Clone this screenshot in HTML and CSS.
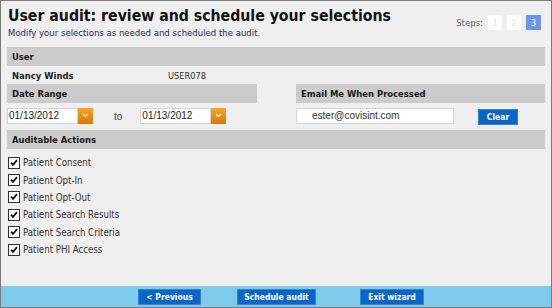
FILE: index.html
```html
<!DOCTYPE html>
<html>
<head>
<meta charset="utf-8">
<link rel="stylesheet" href="styles.css">
</head>
<body>
<div class="frame">
  <div class="head">
    <div class="titles">
      <h1 class="title">User audit: review and schedule your selections</h1>
      <p class="subtitle">Modify your selections as needed and scheduled the audit.</p>
    </div>
    <div class="steps">
      <span class="steps-label">Steps:</span>
      <span class="step">1</span>
      <span class="step">2</span>
      <span class="step step-current">3</span>
    </div>
  </div>

  <div class="content">
    <div class="bar">User</div>
    <div class="user-row">
      <span class="user-name">Nancy Winds</span>
      <span class="user-id">USER078</span>
    </div>

    <div class="cols">
      <div class="col">
        <div class="bar">Date Range</div>
        <div class="field-row">
          <span class="date-input">01/13/2012</span><span class="cal-btn"><svg width="7" height="5" viewBox="0 0 7 5"><path d="M1 1 L3.5 3.5 L6 1" fill="none" stroke="#fde7b8" stroke-width="1.4"/></svg></span>
          <span class="to">to</span>
          <span class="date-input">01/13/2012</span><span class="cal-btn"><svg width="7" height="5" viewBox="0 0 7 5"><path d="M1 1 L3.5 3.5 L6 1" fill="none" stroke="#fde7b8" stroke-width="1.4"/></svg></span>
        </div>
      </div>
      <div class="col">
        <div class="bar">Email Me When Processed</div>
        <div class="field-row">
          <span class="email-input">ester@covisint.com</span>
          <span class="btn btn-clear">Clear</span>
        </div>
      </div>
    </div>

    <div class="bar bar-actions">Auditable Actions</div>
    <ul class="checks">
      <li class="check"><span class="box"><svg width="10" height="10" viewBox="0 0 10 10"><path d="M2 4.6 L4 6.8 L8 2.2" fill="none" stroke="#111" stroke-width="1.8"/></svg></span>Patient Consent</li>
      <li class="check"><span class="box"><svg width="10" height="10" viewBox="0 0 10 10"><path d="M2 4.6 L4 6.8 L8 2.2" fill="none" stroke="#111" stroke-width="1.8"/></svg></span>Patient Opt-In</li>
      <li class="check"><span class="box"><svg width="10" height="10" viewBox="0 0 10 10"><path d="M2 4.6 L4 6.8 L8 2.2" fill="none" stroke="#111" stroke-width="1.8"/></svg></span>Patient Opt-Out</li>
      <li class="check"><span class="box"><svg width="10" height="10" viewBox="0 0 10 10"><path d="M2 4.6 L4 6.8 L8 2.2" fill="none" stroke="#111" stroke-width="1.8"/></svg></span>Patient Search Results</li>
      <li class="check"><span class="box"><svg width="10" height="10" viewBox="0 0 10 10"><path d="M2 4.6 L4 6.8 L8 2.2" fill="none" stroke="#111" stroke-width="1.8"/></svg></span>Patient Search Criteria</li>
      <li class="check"><span class="box"><svg width="10" height="10" viewBox="0 0 10 10"><path d="M2 4.6 L4 6.8 L8 2.2" fill="none" stroke="#111" stroke-width="1.8"/></svg></span>Patient PHI Access</li>
    </ul>
  </div>

  <div class="footer">
    <span class="btn btn-prev">&lt; Previous</span>
    <span class="btn btn-schedule">Schedule audit</span>
    <span class="btn btn-exit">Exit wizard</span>
  </div>
</div>
</body>
</html>
```

FILE: styles.css
```css
html, body {
  margin: 0;
  padding: 0;
}
body {
  font-family: "DejaVu Sans Condensed", "DejaVu Sans", sans-serif;
  color: #222;
}
.frame {
  box-sizing: border-box;
  width: 552px;
  height: 308px;
  border: 1px solid #7a7a7a;
  background: #efefef;
  display: flex;
  flex-direction: column;
}
.head {
  display: flex;
  justify-content: space-between;
  align-items: flex-start;
  padding: 0 10px 0 7px;
}
.title {
  margin: 0;
  padding-top: 5px;
  font-size: 15.7px;
  line-height: 20px;
  font-weight: bold;
  color: #111;
}
.subtitle {
  margin: 0;
  font-size: 9.5px;
  line-height: 13px;
  color: #2a2a55;
}
.steps {
  display: flex;
  align-items: center;
  gap: 5px;
  margin-top: 14px;
}
.steps-label {
  font-size: 9.5px;
  color: #666;
}
.step {
  width: 14px;
  height: 15px;
  background: #fff;
  color: #e2e2e2;
  font-size: 9.5px;
  text-align: center;
  line-height: 15px;
}
.step-current {
  background: #6d97e6;
  color: #fff;
  width: 15px;
}
.content {
  flex: 1;
  padding: 0 6px 0 6px;
}
.bar {
  height: 19px;
  line-height: 19px;
  background: #cccccc;
  font-weight: bold;
  font-size: 9.4px;
  padding-left: 5px;
  color: #1a1a1a;
}
.content > .bar:first-child {
  margin-top: 8px;
}
.user-row {
  display: flex;
  height: 18px;
  align-items: center;
  font-size: 9.4px;
  padding-left: 5px;
}
.user-name {
  font-weight: bold;
  width: 156px;
}
.user-id {
  color: #333;
  font-size: 9.2px;
}
.cols {
  display: grid;
  grid-template-columns: 250px 1fr;
  column-gap: 39px;
}
.field-row {
  display: flex;
  align-items: center;
  margin-top: 4px;
  height: 17px;
}
.date-input {
  box-sizing: border-box;
  width: 71px;
  height: 16px;
  background: #fff;
  border: 1px solid #d4d4d4;
  font-family: "Liberation Sans", Arial, sans-serif;
  font-size: 10px;
  line-height: 14px;
  padding-left: 1px;
  color: #222;
}
.cal-btn {
  box-sizing: border-box;
  width: 15px;
  height: 16px;
  background: linear-gradient(#f6a32a, #d97a08);
  display: flex;
  align-items: center;
  justify-content: center;
}
.to {
  font-family: "Liberation Sans", Arial, sans-serif;
  font-size: 10px;
  color: #444;
  margin: 2px 18px 0 21px;
}
.email-input {
  box-sizing: border-box;
  width: 158px;
  height: 16px;
  background: #fff;
  border: 1px solid #d4d4d4;
  font-family: "Liberation Sans", Arial, sans-serif;
  font-size: 10px;
  line-height: 14px;
  padding-left: 15px;
  color: #333;
}
.btn {
  box-sizing: border-box;
  display: inline-flex;
  align-items: center;
  justify-content: center;
  height: 16px;
  background: #0a66c6;
  border: 1px solid #2f84d8;
  color: #fff;
  font-weight: bold;
  font-size: 8.5px;
}
.btn-clear {
  width: 40px;
  margin-left: 24px;
  margin-top: 2px;
}
.bar-actions {
  margin-top: 6px;
}
.checks {
  list-style: none;
  margin: 5px 0 0 0;
  padding: 0;
}
.check {
  display: flex;
  align-items: center;
  height: 17.4px;
  font-size: 9.6px;
  color: #333;
}
.box {
  box-sizing: border-box;
  width: 12px;
  height: 12px;
  border: 1px solid #333;
  background: #fff;
  display: flex;
  align-items: center;
  justify-content: center;
  margin: 0 3px 0 1px;
}
.footer {
  height: 21px;
  background: #7ecbec;
  display: flex;
  align-items: center;
  padding-left: 137px;
}
.btn-prev {
  width: 63px;
}
.btn-schedule {
  width: 79px;
  margin-left: 36px;
}
.btn-exit {
  width: 64px;
  margin-left: 44px;
}
```
